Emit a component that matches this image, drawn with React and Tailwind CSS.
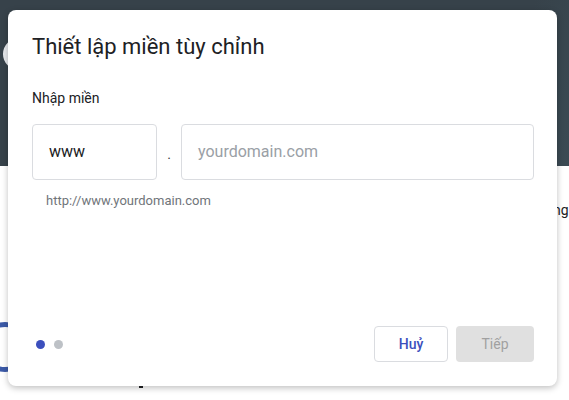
import React from 'react';

const DomainDialog = () => {
  return (
    <div className="absolute left-2 top-[10px] w-[549px] h-[376px] bg-white rounded-lg shadow-[0_2px_6px_rgba(0,0,0,0.25)] flex flex-col">
      {/* Header */}
      <h2 className="pl-6 pt-[22px] text-[22px] leading-[30px] text-[#202124]">
        Thiết lập miền tùy chỉnh
      </h2>

      {/* Body */}
      <div className="pl-6 pr-[23px] pt-[26px] flex-1">
        <p className="text-sm leading-5 text-[#202124]">Nhập miền</p>
        <div className="mt-4 flex items-center">
          <div className="w-[125px] h-[56px] border border-[#dadce0] rounded flex items-center pl-4 text-base text-[#202124]">
            www
          </div>
          <span className="w-[24px] text-center text-[#3c4043] text-sm pt-1">.</span>
          <div className="flex-1 h-[56px] border border-[#dadce0] rounded flex items-center pl-4 text-base text-[#9aa0a6]">
            yourdomain.com
          </div>
        </div>
        <p className="mt-[13px] pl-[14px] text-[13px] leading-4 text-[#70757a]">http://www.yourdomain.com</p>
      </div>

      {/* Footer */}
      <div className="flex items-center justify-between pl-6 pr-[23px] pb-6">
        <div className="flex items-center gap-[9px] pl-[4px]">
          <span className="w-[9px] h-[9px] rounded-full bg-[#3c4fbd]" />
          <span className="w-[9px] h-[9px] rounded-full bg-[#bdc1c6]" />
        </div>
        <div className="flex items-center gap-2">
          <button className="w-[74px] h-9 border border-[#dadce0] rounded text-sm font-medium text-[#3c4fbd] bg-white">
            Huỷ
          </button>
          <button className="w-[78px] h-9 rounded text-sm text-[#a0a0a0] bg-[#e0e0e0]">
            Tiếp
          </button>
        </div>
      </div>
    </div>
  );
};

const App = () => {
  return (
    <div className="relative w-[569px] h-[400px] overflow-hidden bg-white font-['Roboto',sans-serif]">
      {/* Page behind the dialog */}
      <div className="h-[166px] bg-[linear-gradient(110deg,#37424a_85%,#3b4b54_100%)]" />
      <div className="absolute left-[3px] top-[38px] w-[40px] h-[32px] rounded-full bg-[#e8eaed]" />
      <div className="absolute left-[-20px] top-[322px] w-[50px] h-[50px] rounded-full border-[5px] border-[#3c5aa8]" />
      <span className="absolute left-[553px] top-[200px] text-sm text-[#202124]">ng</span>
      <span className="absolute left-[139px] top-[384px] w-[4px] h-[4px] bg-[#202124]" />

      <DomainDialog />
    </div>
  );
};

export default App;
